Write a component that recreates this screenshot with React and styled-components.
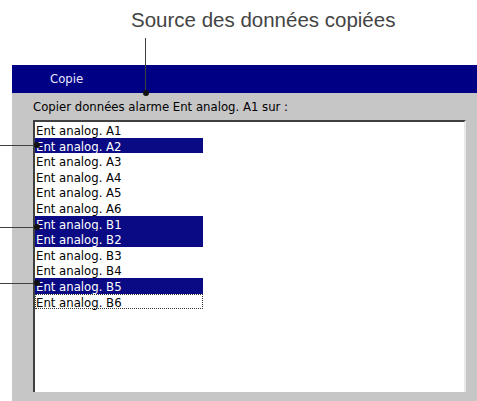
import React from 'react';
import styled, { createGlobalStyle } from 'styled-components';

const GlobalStyle = createGlobalStyle`
  html, body {
    margin: 0;
    padding: 0;
    background: #ffffff;
  }
`;

const items = [
  { label: 'Ent analog. A1' },
  { label: 'Ent analog. A2', selected: true },
  { label: 'Ent analog. A3' },
  { label: 'Ent analog. A4' },
  { label: 'Ent analog. A5' },
  { label: 'Ent analog. A6' },
  { label: 'Ent analog. B1', selected: true },
  { label: 'Ent analog. B2', selected: true },
  { label: 'Ent analog. B3' },
  { label: 'Ent analog. B4' },
  { label: 'Ent analog. B5', selected: true },
  { label: 'Ent analog. B6', focused: true },
];

// rows that get a callout from the left margin
const leftCallouts = [145, 227, 283];

const App = () => {
  return (
    <Page>
      <GlobalStyle />
      <Caption>Source des données copiées</Caption>
      <Window>
        <TitleBar>Copie</TitleBar>
        <Body>
          <Label>Copier données alarme Ent analog. A1 sur :</Label>
          <ListBox>
            {items.map((item) => (
              <Item key={item.label} $selected={item.selected} $focused={item.focused}>
                {item.label}
              </Item>
            ))}
          </ListBox>
        </Body>
      </Window>

      <TopLeader />
      <Dot style={{ left: 143, top: 90 }} />
      {leftCallouts.map((y) => (
        <React.Fragment key={y}>
          <SideLeader style={{ top: y }} />
          <Dot style={{ left: 34, top: y - 3 }} />
        </React.Fragment>
      ))}
    </Page>
  );
};

const Page = styled.div`
  position: relative;
  width: 477px;
  height: 401px;
  overflow: hidden;
  background: #ffffff;
`;

const Caption = styled.div`
  height: 65px;
  box-sizing: border-box;
  padding: 8px 0 0 131px;
  font-family: "Liberation Sans", Arial, sans-serif;
  font-size: 20.5px;
  color: #444444;
  line-height: 24px;
  white-space: nowrap;
`;

const Window = styled.div`
  margin-left: 12px;
  display: flex;
  flex-direction: column;
  height: 336px;
`;

const TitleBar = styled.div`
  height: 28px;
  background: #000084;
  color: #e8e8ff;
  padding-left: 38px;
  font-family: "DejaVu Sans", sans-serif;
  font-stretch: condensed;
  font-size: 13px;
  line-height: 28px;
`;

const Body = styled.div`
  flex: 1;
  background: #c6c6c6;
  padding: 0 11px 9px 21px;
  display: flex;
  flex-direction: column;
`;

const Label = styled.div`
  height: 27px;
  line-height: 27px;
  font-family: "DejaVu Sans", sans-serif;
  font-stretch: condensed;
  font-size: 13px;
  color: #000000;
`;

const ListBox = styled.div`
  flex: 1;
  background: #ffffff;
  border-top: 2px solid #404040;
  border-left: 2px solid #404040;
  border-right: 2px solid #e8e8e8;
  display: flex;
  flex-direction: column;
`;

const Item = styled.div`
  width: 168px;
  height: 15.6px;
  box-sizing: border-box;
  line-height: 15px;
  font-family: "DejaVu Sans", sans-serif;
  font-stretch: condensed;
  font-size: 13px;
  background: ${(p) => (p.$selected ? '#0a0a84' : 'transparent')};
  color: ${(p) => (p.$selected ? '#ffffff' : '#000000')};
  border: 1px dotted ${(p) => (p.$focused ? '#333333' : 'transparent')};
  white-space: nowrap;
`;

const TopLeader = styled.div`
  position: absolute;
  left: 145px;
  top: 38px;
  width: 1px;
  height: 55px;
  background: #404040;
`;

const SideLeader = styled.div`
  position: absolute;
  left: 0;
  width: 36px;
  height: 1px;
  background: #404040;
`;

const Dot = styled.div`
  position: absolute;
  width: 6px;
  height: 6px;
  border-radius: 50%;
  background: #111111;
`;

export default App;
